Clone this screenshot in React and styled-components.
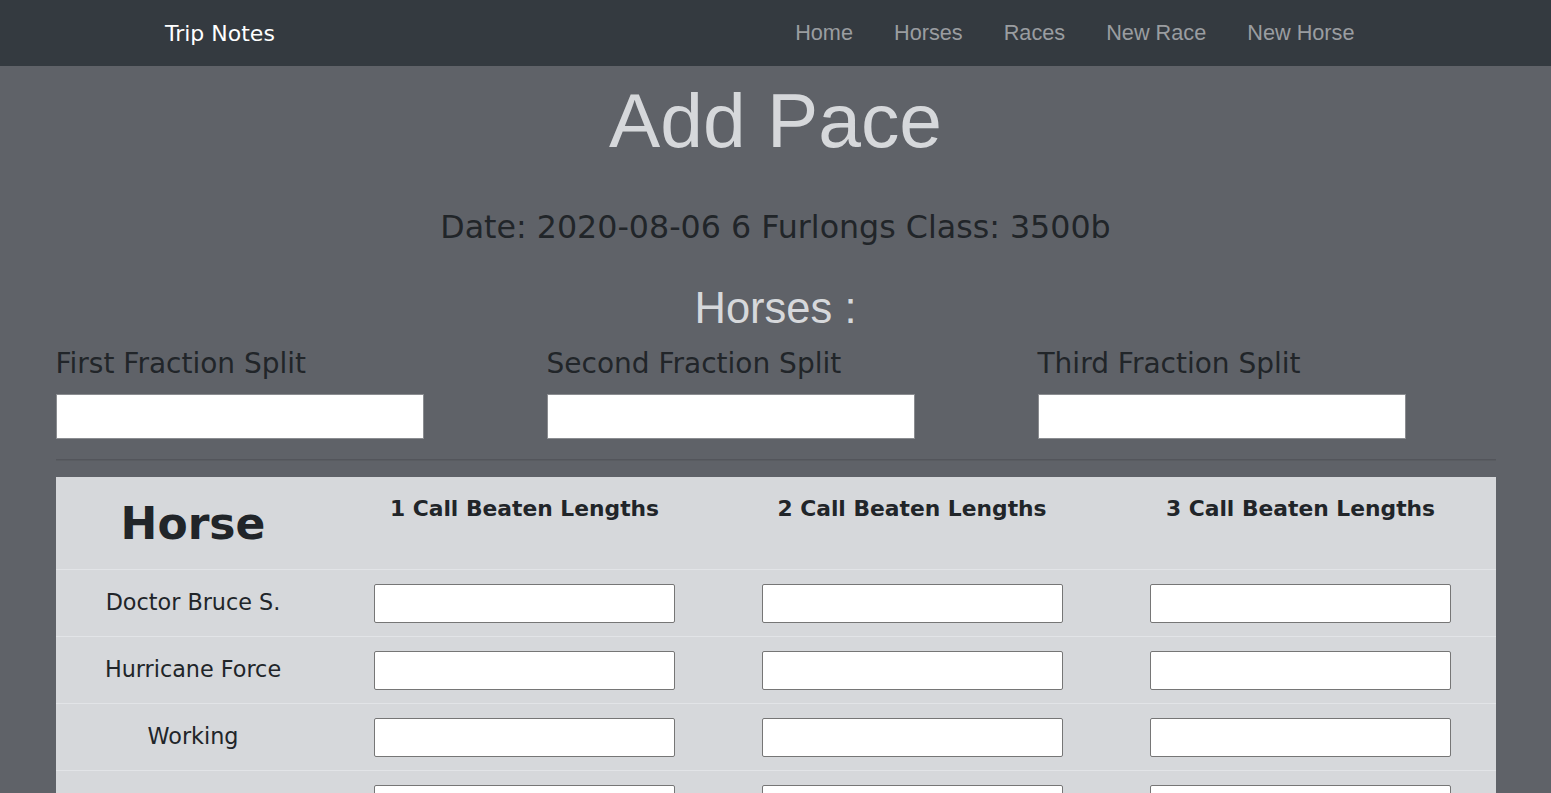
import React from 'react';
import styled, { createGlobalStyle } from 'styled-components';

const GlobalStyle = createGlobalStyle`
  html, body {
    margin: 0;
    padding: 0;
    background: #5f6268;
    font-family: "DejaVu Sans", Verdana, sans-serif;
    color: #212529;
  }
  * {
    box-sizing: border-box;
  }
`;

const Navbar = styled.nav`
  height: 66px;
  background: #343a40;
  display: flex;
  align-items: center;
  justify-content: space-between;
  padding: 0 176px 0 165px;
`;

const Brand = styled.a`
  font-family: "DejaVu Sans", Verdana, sans-serif;
  font-size: 22px;
  color: #fff;
  text-decoration: none;
  margin-top: 1px;
`;

const NavLinks = styled.ul`
  display: flex;
  list-style: none;
  margin: 0;
  padding: 0;
`;

const NavLink = styled.a`
  display: block;
  padding: 0 20.5px;
  font-family: "Liberation Sans", Arial, sans-serif;
  font-size: 21.7px;
  color: #9a9da0;
  text-decoration: none;
`;

const Main = styled.main`
  width: 1440px;
  margin: 0 auto;
  text-align: center;
`;

const Title = styled.h1`
  margin: 8px 0 0;
  font-family: "Liberation Sans", Arial, sans-serif;
  font-weight: 400;
  font-size: 76.8px;
  line-height: 1.2;
  color: #d6d8db;
`;

const RaceInfo = styled.h3`
  margin: 42px 0 0;
  font-weight: 400;
  font-size: 31.7px;
  line-height: 1.2;
  color: #212529;
`;

const SubTitle = styled.h2`
  margin: 36px 0 0;
  font-family: "Liberation Sans", Arial, sans-serif;
  font-weight: 400;
  font-size: 43.5px;
  line-height: 1.2;
  color: #d6d8db;
`;

const SplitRow = styled.div`
  display: grid;
  grid-template-columns: repeat(3, 1fr);
  column-gap: 33px;
  margin-top: 13px;
  text-align: left;
`;

const SplitField = styled.div`
  display: flex;
  flex-direction: column;
`;

const SplitLabel = styled.label`
  font-size: 28px;
  line-height: 1.2;
  color: #212529;
`;

const SplitInput = styled.input`
  width: 368px;
  height: 45px;
  margin-top: 13px;
  border: 1px solid #8a8c90;
  background: #fff;
  padding: 0 8px;
`;

const Divider = styled.hr`
  margin: 20px 0 16px;
  border: 0;
  border-top: 1px solid rgba(0, 0, 0, 0.12);
  border-bottom: 1px solid rgba(0, 0, 0, 0.06);
`;

const Table = styled.table`
  width: 100%;
  table-layout: fixed;
  border-collapse: collapse;
  background: #d6d8db;
`;

const HeadCell = styled.th`
  height: 93px;
  padding: ${p => (p.$big ? '3px 8px 0' : '16px 8px 0')};
  vertical-align: ${p => (p.$big ? 'middle' : 'top')};
  font-size: ${p => (p.$big ? '44px' : '21.8px')};
  font-weight: 700;
  line-height: ${p => (p.$big ? 1.2 : 1.5)};
  color: #212529;
`;

const Row = styled.tr`
  height: 67px;
  border-top: 1px solid #e2e4e7;
`;

const NameCell = styled.td`
  padding: 0 8px 2px;
  vertical-align: middle;
  font-size: 22.3px;
  line-height: 1.5;
  color: #212529;
`;

const InputCell = styled.td`
  padding: 0;
  vertical-align: middle;
  text-align: center;
`;

const CallInput = styled.input`
  display: block;
  margin: 0 auto;
  width: 301px;
  height: 39px;
  border: 1px solid #767676;
  border-radius: 2px;
  background: #fff;
`;

const links = ['Home', 'Horses', 'Races', 'New Race', 'New Horse'];
const splits = ['First Fraction Split', 'Second Fraction Split', 'Third Fraction Split'];
const horses = ['Doctor Bruce S.', 'Hurricane Force', 'Working', 'Tizzy Lizzy'];

const App = () => {
  return (
    <>
      <GlobalStyle />
      <Navbar>
        <Brand href="#">Trip Notes</Brand>
        <NavLinks>
          {links.map(l => (
            <li key={l}>
              <NavLink href="#">{l}</NavLink>
            </li>
          ))}
        </NavLinks>
      </Navbar>

      <Main>
        <Title>Add Pace</Title>
        <RaceInfo>Date: 2020-08-06 6 Furlongs Class: 3500b</RaceInfo>
        <SubTitle>Horses :</SubTitle>

        <SplitRow>
          {splits.map(s => (
            <SplitField key={s}>
              <SplitLabel>{s}</SplitLabel>
              <SplitInput type="text" />
            </SplitField>
          ))}
        </SplitRow>

        <Divider />

        <Table>
          <colgroup>
            <col style={{ width: 275 }} />
            <col style={{ width: 388 }} />
            <col style={{ width: 387 }} />
            <col style={{ width: 390 }} />
          </colgroup>
          <thead>
            <tr>
              <HeadCell $big>Horse</HeadCell>
              <HeadCell>1 Call Beaten Lengths</HeadCell>
              <HeadCell>2 Call Beaten Lengths</HeadCell>
              <HeadCell>3 Call Beaten Lengths</HeadCell>
            </tr>
          </thead>
          <tbody>
            {horses.map(h => (
              <Row key={h}>
                <NameCell>{h}</NameCell>
                <InputCell><CallInput type="text" /></InputCell>
                <InputCell><CallInput type="text" /></InputCell>
                <InputCell><CallInput type="text" /></InputCell>
              </Row>
            ))}
          </tbody>
        </Table>
      </Main>
    </>
  );
};

export default App;
